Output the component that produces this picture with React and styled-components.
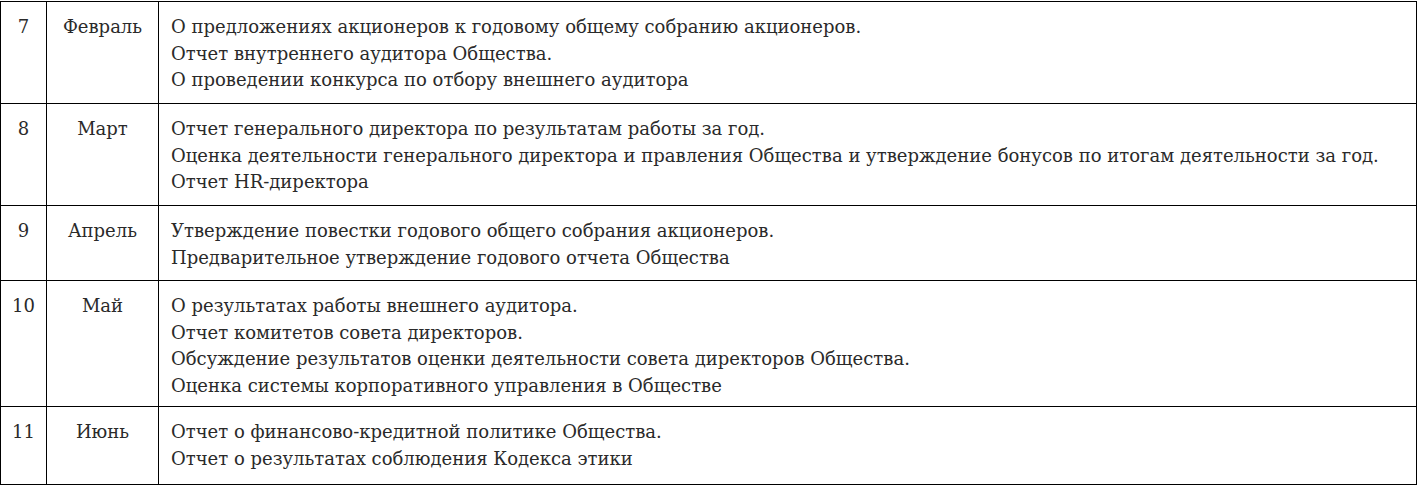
import React from 'react';
import styled, { createGlobalStyle } from "styled-components";

const GlobalStyle = createGlobalStyle`
  body {
    margin: 0;
    background: #fff;
  }
`

const rows = [
    {
        num: 7,
        month: 'Февраль',
        height: 102,
        items: [
            'О предложениях акционеров к годовому общему собранию акционеров.',
            'Отчет внутреннего аудитора Общества.',
            'О проведении конкурса по отбору внешнего аудитора',
        ],
    },
    {
        num: 8,
        month: 'Март',
        height: 102,
        items: [
            'Отчет генерального директора по результатам работы за год.',
            'Оценка деятельности генерального директора и правления Общества и утверждение бонусов по итогам деятельности за год.',
            'Отчет HR-директора',
        ],
    },
    {
        num: 9,
        month: 'Апрель',
        height: 75,
        items: [
            'Утверждение повестки годового общего собрания акционеров.',
            'Предварительное утверждение годового отчета Общества',
        ],
    },
    {
        num: 10,
        month: 'Май',
        height: 126,
        items: [
            'О результатах работы внешнего аудитора.',
            'Отчет комитетов совета директоров.',
            'Обсуждение результатов оценки деятельности совета директоров Общества.',
            'Оценка системы корпоративного управления в Обществе',
        ],
    },
    {
        num: 11,
        month: 'Июнь',
        height: 78,
        items: [
            'Отчет о финансово-кредитной политике Общества.',
            'Отчет о результатах соблюдения Кодекса этики',
        ],
    },
];

const App = () => {
    return (
        <>
            <GlobalStyle/>
            <Table>
                <colgroup>
                    <col style={{width: 46}}/>
                    <col style={{width: 112}}/>
                    <col/>
                </colgroup>
                <tbody>
                {rows.map(row => (
                    <Row key={row.num} $height={row.height}>
                        <Cell $center>{row.num}</Cell>
                        <Cell $center>{row.month}</Cell>
                        <Cell>
                            {row.items.map(item => (
                                <div key={item}>{item}</div>
                            ))}
                        </Cell>
                    </Row>
                ))}
                </tbody>
            </Table>
        </>
    );
};

const Table = styled.table`
  width: 1417px;
  table-layout: fixed;
  border-collapse: collapse;
  margin-top: 1px;
  font-family: "DejaVu Serif", "Liberation Serif", serif;
  font-size: 18px;
  line-height: 26.5px;
  color: #2a2a2a;
`

const Row = styled.tr`
  height: ${p => p.$height}px;
`

const Cell = styled.td`
  border: 1px solid #000;
  vertical-align: top;
  padding: ${p => p.$center ? '12px 2px 0' : '12px 12px 0'};
  text-align: ${p => p.$center ? 'center' : 'left'};
  white-space: nowrap;
`

export default App;
